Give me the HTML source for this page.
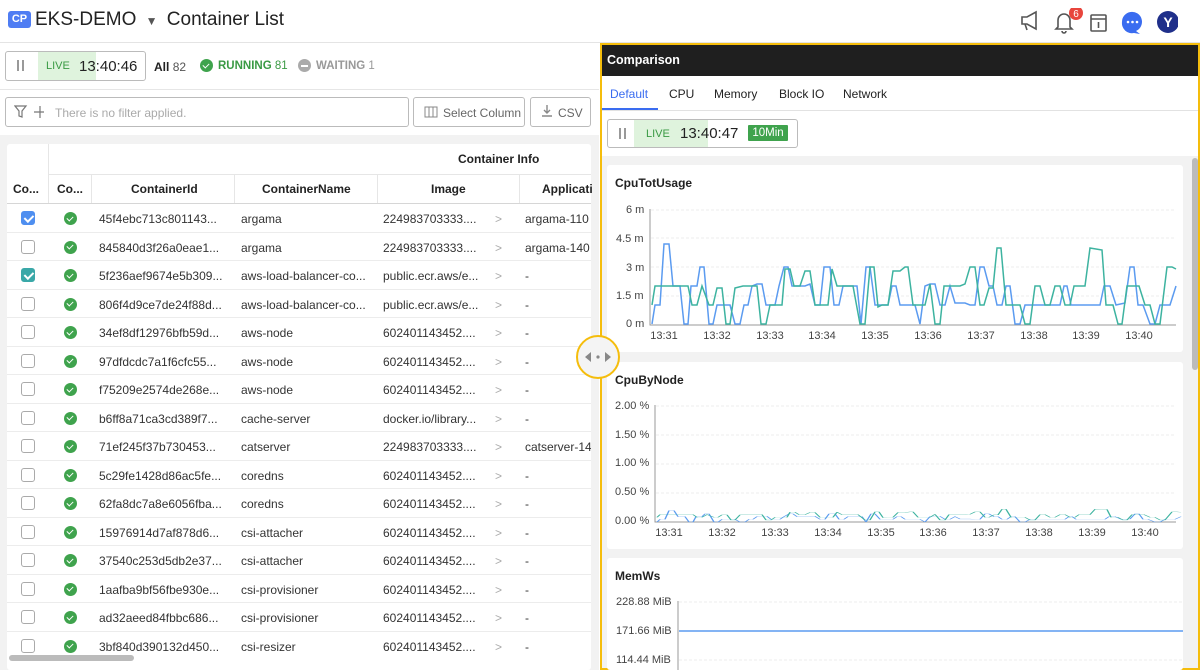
<!DOCTYPE html>
<html><head><meta charset="utf-8">
<style>
*{box-sizing:border-box;margin:0;padding:0}
body{width:1200px;height:670px;overflow:hidden;background:#fff;font-family:"Liberation Sans",sans-serif;color:#222;position:relative}
.abs{position:absolute}
.top{left:0;top:0;width:1200px;height:43px;background:#fff;border-bottom:1px solid #e4e4e4}
.cp{left:8px;top:11px;width:23px;height:17px;background:#4f7df3;border-radius:3px;color:#fff;font-size:11px;font-weight:bold;text-align:center;line-height:17px}
.t1{left:35px;top:9px;font-size:19px;color:#222}
.left{left:0;top:44px;width:599px;height:626px;background:#fff}
.live{border:1px solid #bbb;border-radius:3px;background:#fff}
.btn{border:1px solid #bbb;border-radius:3px;background:#fff;font-size:12px;color:#666}
.tbl{left:7px;top:144px;width:584px;height:526px;background:#fff;border-radius:3px}
.row{position:absolute;left:0;width:584px;height:28.5px;border-bottom:1px solid #ececec;font-size:12px;color:#333}
.row span{position:absolute;top:8px;white-space:nowrap}
.cb{position:absolute;left:14px;top:7px;width:14px;height:14px;border:1px solid #aaa;border-radius:3px;background:#fff}
.cb.on:after{content:"";position:absolute;left:4px;top:1px;width:3.5px;height:7px;border:solid #fff;border-width:0 2px 2px 0;transform:rotate(45deg)}
.ok{position:absolute;left:57px;top:8px;width:13px;height:13px;border-radius:50%;background:#3fa34d}
.ok:after{content:"";position:absolute;left:4px;top:2.5px;width:3px;height:5px;border:solid #fff;border-width:0 1.5px 1.5px 0;transform:rotate(45deg)}
.chev{color:#aaa}
.hd{font-size:12px;font-weight:bold;color:#222;position:absolute;top:182px}
.right{left:600px;top:43px;width:600px;height:627px;border:2px solid #f5bd0c;background:#f2f2f2}
.card{background:#fff;border-radius:3px;position:absolute}
.ax{font-size:11px;color:#444;position:absolute}
.xl{font-size:11px;color:#444;position:absolute;width:40px;text-align:center}
.ttl{font-size:12px;font-weight:bold;position:absolute}
</style></head><body>
<div class="abs top"></div>
<div class="abs cp">CP</div>
<div class="abs t1">EKS-DEMO <span style="font-size:12px;color:#555;margin:0 4px">&#9660;</span> Container List</div>
<svg class="abs" style="left:1018px;top:8px" width="160" height="28" viewBox="0 0 160 28">
<g fill="none" stroke="#555" stroke-width="1.6">
<path d="M4 9h5l9-5v17l-9-5H4z M7 16l2 6"/>
<path d="M40 19V12a6 6 0 0 1 12 0v7l2 2H38z M44 23a2 2 0 0 0 4 0"/>
<rect x="73" y="7" width="15" height="16" rx="1"/><path d="M73 11h15 M80.5 14v6"/>
</g>
<circle cx="58" cy="5" r="7" fill="#e8453c"/><text x="58" y="9" font-size="10" fill="#fff" text-anchor="middle" font-family="Liberation Sans">6</text>
<path d="M104 14a10 10 0 1 1 14 9l4 3-6-1a10 10 0 0 1-12-11z" fill="#3a6cf0"/>
<circle cx="110" cy="14" r="1.3" fill="#fff"/><circle cx="114.5" cy="14" r="1.3" fill="#fff"/><circle cx="119" cy="14" r="1.3" fill="#fff"/>
<circle cx="150" cy="14" r="11" fill="#1f2f8a"/><text x="150" y="19" font-size="14" font-weight="bold" fill="#fff" text-anchor="middle" font-family="Liberation Sans">Y</text>
</svg>

<div class="abs left"></div>
<div class="abs live" style="left:5px;top:51px;width:141px;height:30px"></div>
<div class="abs" style="left:38px;top:52px;width:58px;height:28px;background:#dff3dd"></div>
<div class="abs" style="left:17px;top:60px;width:2px;height:11px;background:#999"></div>
<div class="abs" style="left:22px;top:60px;width:2px;height:11px;background:#999"></div>
<div class="abs" style="left:46px;top:60px;font-size:11px;color:#3a9a44">LIVE</div>
<div class="abs" style="left:79px;top:58px;font-size:15px;color:#222">13:40:46</div>
<div class="abs" style="left:154px;top:60px;font-size:12px"><b>All</b> <span style="color:#555">82</span></div>
<div class="abs ok" style="left:200px;top:59px"></div>
<div class="abs" style="left:218px;top:60px;font-size:11.5px;color:#3a9a44"><b>RUNNING</b> 81</div>
<div class="abs" style="left:298px;top:59px;width:13px;height:13px;border-radius:50%;background:#aaa"><div style="margin:5.5px 3px;height:2px;background:#fff"></div></div>
<div class="abs" style="left:316px;top:60px;font-size:11.5px;color:#999"><b>WAITING</b> 1</div>
<div class="abs" style="left:0;top:89px;width:599px;height:1px;background:#e6e6e6"></div>
<div class="abs btn" style="left:5px;top:97px;width:404px;height:30px"></div>
<svg class="abs" style="left:14px;top:105px" width="30" height="14"><path d="M1 1h11l-4 5v6l-3-1V6z M26 1v12 M20 7h12" fill="none" stroke="#777" stroke-width="1.2"/></svg>
<div class="abs" style="left:55px;top:106px;font-size:12px;color:#aaa">There is no filter applied.</div>
<div class="abs btn" style="left:413px;top:97px;width:112px;height:30px"></div>
<svg class="abs" style="left:424px;top:106px" width="14" height="12"><rect x="1" y="1" width="12" height="10" fill="none" stroke="#888"/><path d="M5 1v10M9 1v10" stroke="#888"/></svg>
<div class="abs" style="left:443px;top:106px;font-size:12px;color:#666">Select Column</div>
<div class="abs btn" style="left:530px;top:97px;width:61px;height:30px"></div>
<svg class="abs" style="left:541px;top:104px" width="12" height="14"><path d="M6 1v8M3 6l3 3 3-3M1 12h10" fill="none" stroke="#888" stroke-width="1.4"/></svg>
<div class="abs" style="left:558px;top:106px;font-size:12px;color:#666">CSV</div>
<div class="abs" style="left:0;top:135px;width:599px;height:535px;background:#f2f2f2"></div>
<div class="abs tbl"></div>
<div class="abs" style="left:48px;top:144px;width:1px;height:59px;background:#e6e6e6"></div>
<div class="abs" style="left:48px;top:174px;width:543px;height:1px;background:#e6e6e6"></div>
<div class="abs" style="left:7px;top:203px;width:584px;height:1px;background:#d6d6d6"></div>
<div class="abs" style="left:91px;top:175px;width:1px;height:28px;background:#e6e6e6"></div>
<div class="abs" style="left:234px;top:175px;width:1px;height:28px;background:#e6e6e6"></div>
<div class="abs" style="left:377px;top:175px;width:1px;height:28px;background:#e6e6e6"></div>
<div class="abs" style="left:519px;top:175px;width:1px;height:28px;background:#e6e6e6"></div>
<div class="hd" style="left:458px;top:152px">Container Info</div>
<div class="hd" style="left:13px">Co...</div>
<div class="hd" style="left:57px">Co...</div>
<div class="hd" style="left:131px">ContainerId</div>
<div class="hd" style="left:262px">ContainerName</div>
<div class="hd" style="left:431px">Image</div>
<div class="hd" style="left:542px">Applicati</div>
<div class="abs" style="left:7px;top:204px;width:584px;height:452px;overflow:hidden">
<div class="row" style="top:0"><i class="cb on" style="background:#4f8ff0;border-color:#4f8ff0"></i><i class="ok"></i><span style="left:92px">45f4ebc713c801143...</span><span style="left:234px">argama</span><span style="left:376px">224983703333....</span><span class="chev" style="left:488px">&gt;</span><span style="left:518px">argama-110</span></div>
<div class="row" style="top:28.5px"><i class="cb"></i><i class="ok"></i><span style="left:92px">845840d3f26a0eae1...</span><span style="left:234px">argama</span><span style="left:376px">224983703333....</span><span class="chev" style="left:488px">&gt;</span><span style="left:518px">argama-140</span></div>
<div class="row" style="top:57px"><i class="cb on" style="background:#3aa8a8;border-color:#3aa8a8"></i><i class="ok"></i><span style="left:92px">5f236aef9674e5b309...</span><span style="left:234px">aws-load-balancer-co...</span><span style="left:376px">public.ecr.aws/e...</span><span class="chev" style="left:488px">&gt;</span><span style="left:518px">-</span></div>
<div class="row" style="top:85.5px"><i class="cb"></i><i class="ok"></i><span style="left:92px">806f4d9ce7de24f88d...</span><span style="left:234px">aws-load-balancer-co...</span><span style="left:376px">public.ecr.aws/e...</span><span class="chev" style="left:488px">&gt;</span><span style="left:518px">-</span></div>
<div class="row" style="top:114px"><i class="cb"></i><i class="ok"></i><span style="left:92px">34ef8df12976bfb59d...</span><span style="left:234px">aws-node</span><span style="left:376px">602401143452....</span><span class="chev" style="left:488px">&gt;</span><span style="left:518px">-</span></div>
<div class="row" style="top:142.5px"><i class="cb"></i><i class="ok"></i><span style="left:92px">97dfdcdc7a1f6cfc55...</span><span style="left:234px">aws-node</span><span style="left:376px">602401143452....</span><span class="chev" style="left:488px">&gt;</span><span style="left:518px">-</span></div>
<div class="row" style="top:171px"><i class="cb"></i><i class="ok"></i><span style="left:92px">f75209e2574de268e...</span><span style="left:234px">aws-node</span><span style="left:376px">602401143452....</span><span class="chev" style="left:488px">&gt;</span><span style="left:518px">-</span></div>
<div class="row" style="top:199.5px"><i class="cb"></i><i class="ok"></i><span style="left:92px">b6ff8a71ca3cd389f7...</span><span style="left:234px">cache-server</span><span style="left:376px">docker.io/library...</span><span class="chev" style="left:488px">&gt;</span><span style="left:518px">-</span></div>
<div class="row" style="top:228px"><i class="cb"></i><i class="ok"></i><span style="left:92px">71ef245f37b730453...</span><span style="left:234px">catserver</span><span style="left:376px">224983703333....</span><span class="chev" style="left:488px">&gt;</span><span style="left:518px">catserver-14</span></div>
<div class="row" style="top:256.5px"><i class="cb"></i><i class="ok"></i><span style="left:92px">5c29fe1428d86ac5fe...</span><span style="left:234px">coredns</span><span style="left:376px">602401143452....</span><span class="chev" style="left:488px">&gt;</span><span style="left:518px">-</span></div>
<div class="row" style="top:285px"><i class="cb"></i><i class="ok"></i><span style="left:92px">62fa8dc7a8e6056fba...</span><span style="left:234px">coredns</span><span style="left:376px">602401143452....</span><span class="chev" style="left:488px">&gt;</span><span style="left:518px">-</span></div>
<div class="row" style="top:313.5px"><i class="cb"></i><i class="ok"></i><span style="left:92px">15976914d7af878d6...</span><span style="left:234px">csi-attacher</span><span style="left:376px">602401143452....</span><span class="chev" style="left:488px">&gt;</span><span style="left:518px">-</span></div>
<div class="row" style="top:342px"><i class="cb"></i><i class="ok"></i><span style="left:92px">37540c253d5db2e37...</span><span style="left:234px">csi-attacher</span><span style="left:376px">602401143452....</span><span class="chev" style="left:488px">&gt;</span><span style="left:518px">-</span></div>
<div class="row" style="top:370.5px"><i class="cb"></i><i class="ok"></i><span style="left:92px">1aafba9bf56fbe930e...</span><span style="left:234px">csi-provisioner</span><span style="left:376px">602401143452....</span><span class="chev" style="left:488px">&gt;</span><span style="left:518px">-</span></div>
<div class="row" style="top:399px"><i class="cb"></i><i class="ok"></i><span style="left:92px">ad32aeed84fbbc686...</span><span style="left:234px">csi-provisioner</span><span style="left:376px">602401143452....</span><span class="chev" style="left:488px">&gt;</span><span style="left:518px">-</span></div>
<div class="row" style="top:427.5px"><i class="cb"></i><i class="ok"></i><span style="left:92px">3bf840d390132d450...</span><span style="left:234px">csi-resizer</span><span style="left:376px">602401143452....</span><span class="chev" style="left:488px">&gt;</span><span style="left:518px">-</span></div>
</div>
<div class="abs" style="left:9px;top:655px;width:125px;height:6px;border-radius:3px;background:#bbb"></div>

<div class="abs right"></div>
<div class="abs" style="left:602px;top:45px;width:596px;height:31px;background:#1f1f1f"></div>
<div class="abs" style="left:607px;top:53px;font-size:12.5px;font-weight:bold;color:#fff">Comparison</div>
<div class="abs" style="left:602px;top:76px;width:596px;height:35px;background:#fff;border-bottom:1px solid #e2e2e2"></div>
<div class="abs" style="left:610px;top:87px;font-size:12px;color:#3a6cf0">Default</div>
<div class="abs" style="left:602px;top:108px;width:56px;height:2px;background:#3a6cf0"></div>
<div class="abs" style="left:669px;top:87px;font-size:12px">CPU</div>
<div class="abs" style="left:714px;top:87px;font-size:12px">Memory</div>
<div class="abs" style="left:779px;top:87px;font-size:12px">Block IO</div>
<div class="abs" style="left:843px;top:87px;font-size:12px">Network</div>
<div class="abs" style="left:602px;top:111px;width:596px;height:45px;background:#fff"></div>
<div class="abs live" style="left:607px;top:119px;width:191px;height:29px"></div>
<div class="abs" style="left:634px;top:120px;width:74px;height:27px;background:#dff3dd"></div>
<div class="abs" style="left:619px;top:128px;width:2px;height:11px;background:#999"></div>
<div class="abs" style="left:624px;top:128px;width:2px;height:11px;background:#999"></div>
<div class="abs" style="left:646px;top:128px;font-size:11px;color:#3a9a44">LIVE</div>
<div class="abs" style="left:680px;top:125px;font-size:15px">13:40:47</div>
<div class="abs" style="left:748px;top:125px;width:40px;height:16px;background:#3fa34d;color:#fff;font-size:11.5px;text-align:center;line-height:16px;border-radius:1px">10Min</div>
<div class="abs" style="left:1192px;top:158px;width:6px;height:212px;background:#bbb;border-radius:3px"></div>

<div class="card" style="left:607px;top:165px;width:576px;height:187px"></div>
<div class="card" style="left:607px;top:362px;width:576px;height:187px"></div>
<div class="card" style="left:607px;top:558px;width:576px;height:112px"></div>
<div class="ttl" style="left:615px;top:176px">CpuTotUsage</div>
<div class="ttl" style="left:615px;top:373px">CpuByNode</div>
<div class="ttl" style="left:615px;top:569px">MemWs</div>

<div class="ax" style="left:626px;top:204px">6 m</div>
<div class="ax" style="left:616px;top:233px">4.5 m</div>
<div class="ax" style="left:626px;top:262px">3 m</div>
<div class="ax" style="left:616px;top:290px">1.5 m</div>
<div class="ax" style="left:626px;top:318px">0 m</div>
<div class="ax" style="left:615px;top:400px">2.00 %</div>
<div class="ax" style="left:615px;top:429px">1.50 %</div>
<div class="ax" style="left:615px;top:457px">1.00 %</div>
<div class="ax" style="left:615px;top:486px">0.50 %</div>
<div class="ax" style="left:615px;top:515px">0.00 %</div>
<div class="ax" style="left:616px;top:596px">228.88 MiB</div>
<div class="ax" style="left:616px;top:625px">171.66 MiB</div>
<div class="ax" style="left:616px;top:654px">114.44 MiB</div>

<div class="xl" style="left:644px;top:330px">13:31</div>
<div class="xl" style="left:697px;top:330px">13:32</div>
<div class="xl" style="left:750px;top:330px">13:33</div>
<div class="xl" style="left:802px;top:330px">13:34</div>
<div class="xl" style="left:855px;top:330px">13:35</div>
<div class="xl" style="left:908px;top:330px">13:36</div>
<div class="xl" style="left:961px;top:330px">13:37</div>
<div class="xl" style="left:1014px;top:330px">13:38</div>
<div class="xl" style="left:1066px;top:330px">13:39</div>
<div class="xl" style="left:1119px;top:330px">13:40</div>

<div class="xl" style="left:649px;top:527px">13:31</div>
<div class="xl" style="left:702px;top:527px">13:32</div>
<div class="xl" style="left:755px;top:527px">13:33</div>
<div class="xl" style="left:808px;top:527px">13:34</div>
<div class="xl" style="left:861px;top:527px">13:35</div>
<div class="xl" style="left:913px;top:527px">13:36</div>
<div class="xl" style="left:966px;top:527px">13:37</div>
<div class="xl" style="left:1019px;top:527px">13:38</div>
<div class="xl" style="left:1072px;top:527px">13:39</div>
<div class="xl" style="left:1125px;top:527px">13:40</div>

<svg class="abs" style="left:0;top:0" width="1200" height="670">
<g stroke="#eee" stroke-dasharray="3 2"><path d="M651 210H1176M651 238H1176M651 267H1176M651 296H1176M656 406H1176M656 435H1176M656 464H1176M656 493H1176M679 602H1183M679 660H1183"/></g>
<path d="M650 209V325H1176" fill="none" stroke="#999"/>
<path d="M655 405V522H1176" fill="none" stroke="#999"/>
<path d="M678 601V670" fill="none" stroke="#999"/>
<path d="M679 631H1183" stroke="#5b9bf0" stroke-width="1.5"/>
<defs>
<polyline id="b" fill="none" points="652,324 655,305 660,305 664,244 669,244 673,286 680,286 684,324 688,324 691,286 697,286 700,267 704,267 709,324 713,324 717,305 730,305 735,324 740,324 744,305 748,305 752,286 757,284 762,284 766,305 775,305 779,286 784,267 788,267 792,286 800,286 805,286 810,284 815,305 820,305 824,267 830,267 834,305 839,305 843,286 857,286 861,324 866,267 870,267 875,305 888,305 892,286 896,286 900,305 915,305 920,324 925,286 930,284 935,284 940,305 945,305 950,286 955,303 965,303 970,305 975,305 980,267 984,267 989,286 993,286 997,305 1002,305 1006,286 1010,286 1015,324 1020,324 1025,305 1060,305 1064,286 1067,286 1071,305 1100,305 1104,286 1110,286 1116,305 1125,303 1130,267 1134,267 1138,305 1143,305 1150,324 1155,324 1160,305 1170,305 1176,286"/>
<polyline id="g" fill="none" points="652,305 655,286 680,286 688,286 692,305 697,305 702,286 709,305 713,305 717,288 722,288 726,324 730,324 735,288 743,286 757,286 761,324 766,324 770,305 782,305 785,269 790,269 794,286 800,286 805,271 810,271 815,305 828,305 832,269 837,286 853,286 860,324 865,324 870,267 874,267 878,307 882,305 888,305 893,271 900,271 905,267 908,267 913,305 925,305 930,284 935,324 940,324 944,286 960,286 965,284 970,267 975,267 980,305 984,305 989,288 993,288 997,248 1001,248 1006,305 1020,305 1025,324 1030,324 1035,286 1040,286 1045,305 1050,305 1055,286 1060,286 1065,305 1070,305 1074,286 1085,286 1090,248 1102,250 1106,305 1113,305 1118,324 1122,324 1127,286 1139,286 1145,305 1150,305 1155,324 1160,324 1167,267 1172,267 1176,269"/>
</defs>
<use href="#b" stroke="#5b9bf0" stroke-width="1.5"/>
<use href="#g" stroke="#3db3a0" stroke-width="1.5"/>
<g transform="translate(5,476) scale(1,0.142)"><use href="#b" stroke="#5b9bf0" stroke-width="1.5" style="vector-effect:non-scaling-stroke"/></g>
<g transform="translate(5,474) scale(1,0.142)"><use href="#g" stroke="#3db3a0" stroke-width="1.5" style="vector-effect:non-scaling-stroke"/></g>
<circle cx="598" cy="357" r="21" fill="#f4f4f4" stroke="#f5bd0c" stroke-width="2"/>
<path d="M585 357l6-5v10z M611 357l-6-5v10z" fill="#888"/><circle cx="598" cy="357" r="1.6" fill="#888"/>
</svg>
</body></html>
